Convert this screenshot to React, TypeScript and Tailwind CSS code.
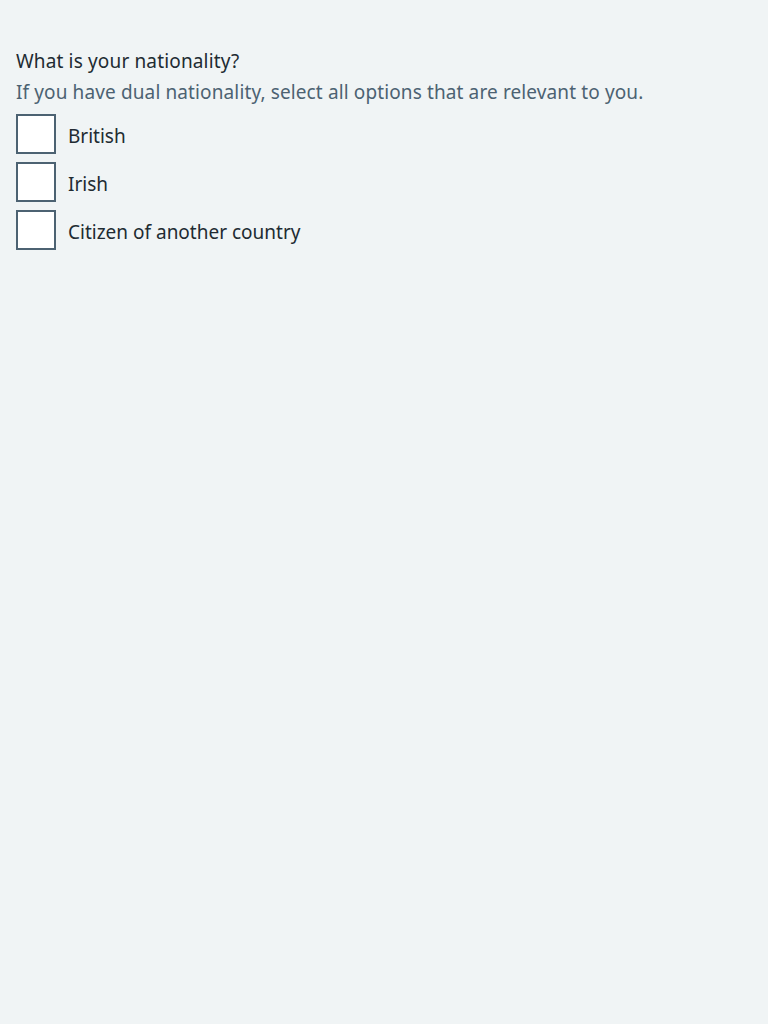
const options = ['British', 'Irish', 'Citizen of another country'];

export default function App() {
  return (
    <div className="min-h-[1024px] bg-[#f0f4f5] px-4 pt-[47px] text-[#212b32] [font-family:'Noto_Sans',sans-serif]">
      <fieldset>
        <legend className="mb-[3px] text-[19px] leading-[28px] tracking-[0.15px]">What is your nationality?</legend>
        <div className="mb-2 text-[19px] leading-[28px] tracking-[0.12px] text-[#4c6272]">
          If you have dual nationality, select all options that are relevant to you.
        </div>
        <div className="flex flex-col gap-2">
          {options.map((opt) => (
            <label key={opt} className="flex items-center gap-3">
              <span className="h-10 w-10 shrink-0 border-2 border-[#4c6272] bg-white" />
              <span className="pt-[3px] text-[19px] leading-[28px]">{opt}</span>
            </label>
          ))}
        </div>
      </fieldset>
    </div>
  );
}
